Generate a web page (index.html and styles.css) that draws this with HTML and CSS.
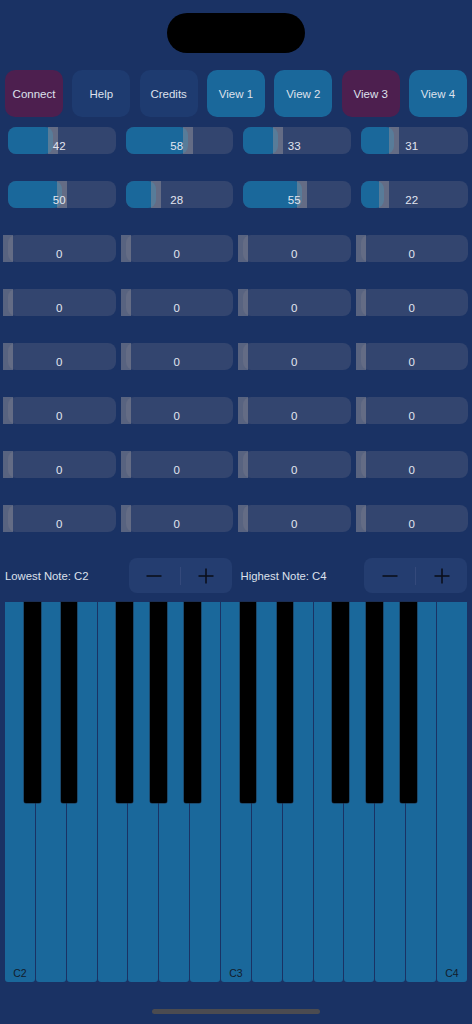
FILE: index.html
```html
<!DOCTYPE html>
<html>
<head>
<meta charset="utf-8">
<link rel="stylesheet" href="styles.css">
</head>
<body>
<div class="screen">
  <div class="island"></div>

  <nav class="nav">
    <button class="btn purple">Connect</button>
    <button class="btn dark">Help</button>
    <button class="btn dark">Credits</button>
    <button class="btn blue">View 1</button>
    <button class="btn blue">View 2</button>
    <button class="btn purple">View 3</button>
    <button class="btn blue">View 4</button>
  </nav>

  <div class="sliders">
    <div class="slider" style="--v:0.42"><div class="fill"></div><div class="thumb"></div><span class="val">42</span></div>
    <div class="slider" style="--v:0.58"><div class="fill"></div><div class="thumb"></div><span class="val">58</span></div>
    <div class="slider" style="--v:0.33"><div class="fill"></div><div class="thumb"></div><span class="val">33</span></div>
    <div class="slider" style="--v:0.31"><div class="fill"></div><div class="thumb"></div><span class="val">31</span></div>

    <div class="slider" style="--v:0.50"><div class="fill"></div><div class="thumb"></div><span class="val">50</span></div>
    <div class="slider" style="--v:0.28"><div class="fill"></div><div class="thumb"></div><span class="val">28</span></div>
    <div class="slider" style="--v:0.55"><div class="fill"></div><div class="thumb"></div><span class="val">55</span></div>
    <div class="slider" style="--v:0.22"><div class="fill"></div><div class="thumb"></div><span class="val">22</span></div>

    <div class="slider" style="--v:0"><div class="fill"></div><div class="thumb"></div><span class="val">0</span></div>
    <div class="slider" style="--v:0"><div class="fill"></div><div class="thumb"></div><span class="val">0</span></div>
    <div class="slider" style="--v:0"><div class="fill"></div><div class="thumb"></div><span class="val">0</span></div>
    <div class="slider" style="--v:0"><div class="fill"></div><div class="thumb"></div><span class="val">0</span></div>

    <div class="slider" style="--v:0"><div class="fill"></div><div class="thumb"></div><span class="val">0</span></div>
    <div class="slider" style="--v:0"><div class="fill"></div><div class="thumb"></div><span class="val">0</span></div>
    <div class="slider" style="--v:0"><div class="fill"></div><div class="thumb"></div><span class="val">0</span></div>
    <div class="slider" style="--v:0"><div class="fill"></div><div class="thumb"></div><span class="val">0</span></div>

    <div class="slider" style="--v:0"><div class="fill"></div><div class="thumb"></div><span class="val">0</span></div>
    <div class="slider" style="--v:0"><div class="fill"></div><div class="thumb"></div><span class="val">0</span></div>
    <div class="slider" style="--v:0"><div class="fill"></div><div class="thumb"></div><span class="val">0</span></div>
    <div class="slider" style="--v:0"><div class="fill"></div><div class="thumb"></div><span class="val">0</span></div>

    <div class="slider" style="--v:0"><div class="fill"></div><div class="thumb"></div><span class="val">0</span></div>
    <div class="slider" style="--v:0"><div class="fill"></div><div class="thumb"></div><span class="val">0</span></div>
    <div class="slider" style="--v:0"><div class="fill"></div><div class="thumb"></div><span class="val">0</span></div>
    <div class="slider" style="--v:0"><div class="fill"></div><div class="thumb"></div><span class="val">0</span></div>

    <div class="slider" style="--v:0"><div class="fill"></div><div class="thumb"></div><span class="val">0</span></div>
    <div class="slider" style="--v:0"><div class="fill"></div><div class="thumb"></div><span class="val">0</span></div>
    <div class="slider" style="--v:0"><div class="fill"></div><div class="thumb"></div><span class="val">0</span></div>
    <div class="slider" style="--v:0"><div class="fill"></div><div class="thumb"></div><span class="val">0</span></div>

    <div class="slider" style="--v:0"><div class="fill"></div><div class="thumb"></div><span class="val">0</span></div>
    <div class="slider" style="--v:0"><div class="fill"></div><div class="thumb"></div><span class="val">0</span></div>
    <div class="slider" style="--v:0"><div class="fill"></div><div class="thumb"></div><span class="val">0</span></div>
    <div class="slider" style="--v:0"><div class="fill"></div><div class="thumb"></div><span class="val">0</span></div>
  </div>

  <div class="controls">
    <div class="range">
      <span class="rlabel">Lowest Note: C2</span>
      <div class="stepper">
        <span class="step"><svg width="16" height="16" viewBox="0 0 16 16"><line x1="0.5" y1="8" x2="15.5" y2="8"/></svg></span>
        <span class="divider"></span>
        <span class="step"><svg width="16" height="16" viewBox="0 0 16 16"><line x1="0.5" y1="8" x2="15.5" y2="8"/><line x1="8" y1="0.5" x2="8" y2="15.5"/></svg></span>
      </div>
    </div>
    <div class="range">
      <span class="rlabel">Highest Note: C4</span>
      <div class="stepper">
        <span class="step"><svg width="16" height="16" viewBox="0 0 16 16"><line x1="0.5" y1="8" x2="15.5" y2="8"/></svg></span>
        <span class="divider"></span>
        <span class="step"><svg width="16" height="16" viewBox="0 0 16 16"><line x1="0.5" y1="8" x2="15.5" y2="8"/><line x1="8" y1="0.5" x2="8" y2="15.5"/></svg></span>
      </div>
    </div>
  </div>

  <div class="keyboard">
    <div class="wkey"><span class="klabel">C2</span></div>
    <div class="wkey"></div>
    <div class="wkey"></div>
    <div class="wkey"></div>
    <div class="wkey"></div>
    <div class="wkey"></div>
    <div class="wkey"></div>
    <div class="wkey"><span class="klabel">C3</span></div>
    <div class="wkey"></div>
    <div class="wkey"></div>
    <div class="wkey"></div>
    <div class="wkey"></div>
    <div class="wkey"></div>
    <div class="wkey"></div>
    <div class="wkey"><span class="klabel">C4</span></div>

    <div class="bkey k1"></div>
    <div class="bkey k2"></div>
    <div class="bkey k3"></div>
    <div class="bkey k4"></div>
    <div class="bkey k5"></div>
    <div class="bkey k6"></div>
    <div class="bkey k7"></div>
    <div class="bkey k8"></div>
    <div class="bkey k9"></div>
    <div class="bkey k10"></div>
  </div>

  <div class="home"></div>
</div>
</body>
</html>
```

FILE: styles.css
```css
* { box-sizing: border-box; }

html, body {
  margin: 0;
  padding: 0;
  background: #1a3264;
}

.screen {
  width: 472px;
  height: 1024px;
  overflow: hidden;
  background: #1a3264;
  display: flex;
  flex-direction: column;
  font-family: "Liberation Sans", Arial, sans-serif;
  color: #dde1ec;
}

.island {
  width: 138px;
  height: 40px;
  margin: 13px auto 0;
  background: #000;
  border-radius: 20px;
  flex: none;
}

.nav {
  display: flex;
  gap: 9.33px;
  padding: 0 5px;
  margin-top: 17px;
  flex: none;
}

.btn {
  flex: 1;
  height: 47px;
  border: none;
  border-radius: 10px;
  font-family: "Liberation Sans", Arial, sans-serif;
  font-size: 11.5px;
  color: #dde1ec;
  padding: 0;
}

.btn.purple { background: #4d1f4f; }
.btn.dark { background: #1e3b70; }
.btn.blue { background: #1a689b; }

.sliders {
  display: grid;
  grid-template-columns: repeat(4, 1fr);
  column-gap: 10px;
  row-gap: 27px;
  padding: 0 4px 0 8px;
  margin-top: 10px;
  flex: none;
}

.slider {
  position: relative;
  height: 27px;
  background: #33456f;
  border-radius: 8px;
}

.fill {
  position: absolute;
  left: 0;
  top: 0;
  bottom: 0;
  width: calc(var(--v) * 100%);
  background: #1a689b;
  border-radius: 8px;
}

.thumb {
  position: absolute;
  top: 0;
  bottom: 0;
  width: 10px;
  left: calc(var(--v) * 100% - 5px);
  background: rgba(140, 140, 152, 0.55);
}

.val {
  position: absolute;
  left: 0;
  right: 5px;
  bottom: 1.5px;
  text-align: center;
  font-size: 11.5px;
  line-height: 13px;
  color: #e2e6f0;
}

.controls {
  display: flex;
  gap: 9px;
  padding: 0 5px;
  margin-top: 26px;
  flex: none;
}

.range {
  flex: 1;
  display: flex;
  align-items: center;
  justify-content: space-between;
}

.rlabel {
  font-size: 11.3px;
  color: #dde1ec;
}

.stepper {
  width: 103px;
  height: 35px;
  border-radius: 8px;
  background: #243d70;
  display: flex;
  align-items: center;
}

.step {
  flex: 1;
  display: flex;
  justify-content: center;
  align-items: center;
}

.step svg {
  stroke: #0b0f1c;
  stroke-width: 1.6;
}

.divider {
  width: 1px;
  height: 18px;
  background: #34497b;
}

.keyboard {
  position: relative;
  display: flex;
  gap: 1px;
  height: 380px;
  margin: 9px 5px 0;
  flex: none;
}

.wkey {
  flex: 1;
  background: #1a689b;
  border-radius: 0 0 3px 3px;
  display: flex;
  align-items: flex-end;
  justify-content: center;
  padding-bottom: 3px;
}

.klabel {
  font-size: 10.5px;
  line-height: 12px;
  color: #121c2c;
}

.bkey {
  position: absolute;
  top: 0;
  width: 16.5px;
  height: 201px;
  background: #000;
  border-radius: 0 0 2px 2px;
  box-shadow: 0 0 0 0.5px #1c2a40;
}

.k1 { left: 19px; }
.k2 { left: 55.7px; }
.k3 { left: 111.3px; }
.k4 { left: 145.3px; }
.k5 { left: 179.3px; }
.k6 { left: 234.9px; }
.k7 { left: 271.6px; }
.k8 { left: 327.2px; }
.k9 { left: 361.2px; }
.k10 { left: 395.2px; }

.home {
  width: 168px;
  height: 5px;
  margin: 27px auto 0;
  border-radius: 3px;
  background: #4b4b50;
  flex: none;
}
```
